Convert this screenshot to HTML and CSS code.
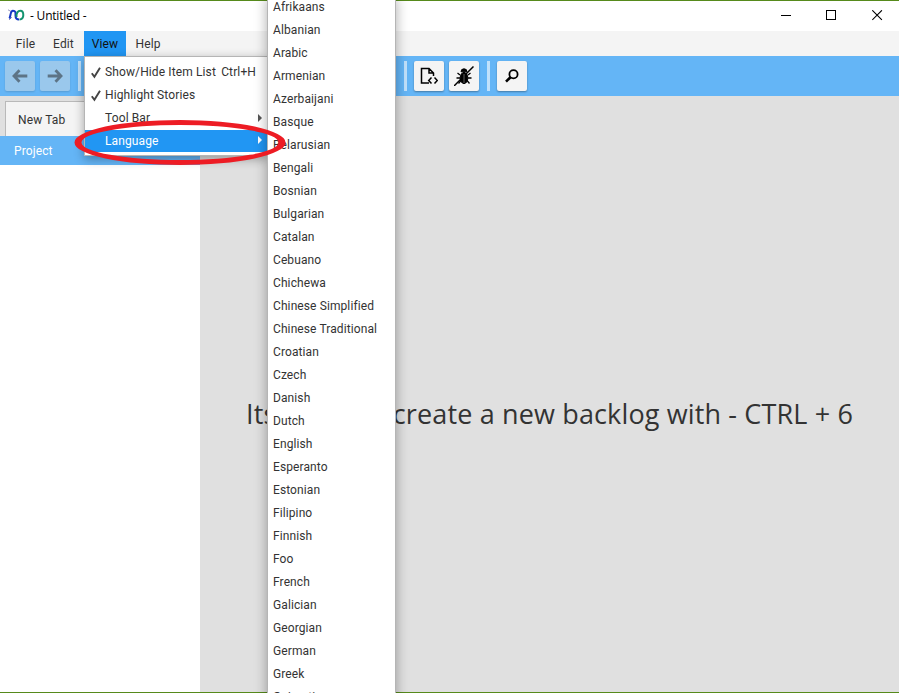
FILE: index.html
```html
<!DOCTYPE html>
<html lang="en">
<head>
<meta charset="utf-8">
<title>Untitled</title>
<link rel="stylesheet" href="styles.css">
</head>
<body>
<div class="window">
  <header class="titlebar">
    <svg class="logo" width="17" height="12" viewBox="0 0 17 12" fill="none" stroke-width="2"><path d="M0 .8L4 3M1 11l3-3" stroke="#9999c0" stroke-width="1"/><path d="M1.3 9.5C2.8 8 2 1.8 5 1.8S7.5 4 7.5 6.5s1 4 3.5 4" stroke="#1536c5"/><path d="M8.5 8C8 4 10 1.8 12.3 1.8S15.3 3.5 15.3 6S14 10.4 11.5 10.4" stroke="#13936f"/></svg>
    <span class="title">- Untitled -</span>
    <div class="controls">
      <svg width="11" height="11" viewBox="0 0 11 11" shape-rendering="crispEdges"><path d="M1 5.5h10" stroke="#000"/></svg>
      <svg width="11" height="11" viewBox="0 0 11 11" shape-rendering="crispEdges"><path d="M.5.5h9v9h-9z" fill="none" stroke="#000"/></svg>
      <svg width="11" height="11" viewBox="0 0 11 11"><path d="M.3.3l9.6 9.6M9.9.3L.3 9.9" stroke="#000" stroke-width="1.1"/></svg>
    </div>
  </header>
  <nav class="menubar"><span class="m-file">File</span><span class="m-edit">Edit</span><span class="m-view">View</span><span class="m-help">Help</span></nav>
  <div class="toolbar">
    <button class="tool off"><svg width="16" height="14" viewBox="0 0 16 14" fill="none" stroke="#222" stroke-width="2.8"><path d="M15.3 7H2M7.5 1.3L2 7l5.5 5.7"/></svg></button>
    <button class="tool off"><svg width="16" height="14" viewBox="0 0 16 14" fill="none" stroke="#222" stroke-width="2.8"><path d="M.7 7H14M8.5 1.3L14 7l-5.5 5.7"/></svg></button>
    <i class="sep"></i>
    <i class="sep sep-mid"></i>
    <button class="tool"><svg width="18" height="18" viewBox="0 0 18 18" fill="none" stroke="#000" stroke-width="1.5"><path d="M9 16H1.5V1.5H9L13.5 6v3M9 1.5V6h4.5M11.5 10.5l-2.8 3l2.8 3M14.5 10.5l2.8 3l-2.8 3"/></svg></button>
    <button class="tool"><svg width="20" height="20" viewBox="0 0 20 20" fill="none" stroke="#000"><path d="M0 20L19.5.5" stroke-width="1.5"/><ellipse cx="10" cy="12" rx="3.8" ry="5.6" fill="#000"/><path d="M7 5.8a3 3 0 016 0z" fill="#000"/><path d="M6 9L3.5 7M6 12H2.5M7 14.5L4.5 17.5M14 9l2.5-2M14 12h3.5M13 14.5l2.5 3" stroke-width="1.3"/><path d="M10 8v9" stroke="#777" stroke-width=".8"/></svg></button>
    <i class="sep sep-end"></i>
    <button class="tool"><svg width="14" height="14" viewBox="0 0 14 14" fill="none" stroke="#000"><circle cx="8.5" cy="5.2" r="4.1" stroke-width="1.8"/><path d="M5.5 8.2L1 12.6" stroke-width="2.6"/></svg></button>
  </div>
  <main class="content">
    <aside class="side">
      <div class="tabs"><div class="tab">New Tab</div></div>
      <div class="project">Project</div>
      <div class="list"></div>
    </aside>
    <section class="stage"><p class="hint"><span>Its easy to</span><span>create a new backlog with - CTRL + 6</span></p></section>
  </main>
  <div class="dropdown">
    <div class="item"><svg class="check" width="10" height="12" viewBox="0 0 10 12"><path d="M.8 6.3L3.4 9.8L9 .8" fill="none" stroke="#444" stroke-width="1.9"/></svg><span>Show/Hide Item List</span><span class="key">Ctrl+H</span></div>
    <div class="item"><svg class="check" width="10" height="12" viewBox="0 0 10 12"><path d="M.8 6.3L3.4 9.8L9 .8" fill="none" stroke="#444" stroke-width="1.9"/></svg><span>Highlight Stories</span></div>
    <div class="item"><i class="check"></i><span>Tool Bar</span><i class="arrow"></i></div>
    <div class="item active"><i class="check"></i><span>Language</span><i class="arrow"></i></div>
  </div>
  <div class="languages">
    <div>Afrikaans</div><div>Albanian</div><div>Arabic</div><div>Armenian</div><div>Azerbaijani</div><div>Basque</div><div>Belarusian</div><div>Bengali</div><div>Bosnian</div><div>Bulgarian</div><div>Catalan</div><div>Cebuano</div><div>Chichewa</div><div>Chinese Simplified</div><div>Chinese Traditional</div><div>Croatian</div><div>Czech</div><div>Danish</div><div>Dutch</div><div>English</div><div>Esperanto</div><div>Estonian</div><div>Filipino</div><div>Finnish</div><div>Foo</div><div>French</div><div>Galician</div><div>Georgian</div><div>German</div><div>Greek</div><div>Gujarati</div>
  </div>
  <svg class="ring" width="214" height="48" viewBox="0 0 214 48"><path fill="#ed1c24" fill-rule="evenodd" d="M.5 23.5a105.5 22.5 0 01211 0a105.5 22.5 0 01-211 0zM7.5 23.5a98.5 17.5 0 00197 0a98.5 17.5 0 00-197 0z"/></svg>
</div>
</body>
</html>
```
FILE: styles.css
```css
* { box-sizing: border-box; }
body { margin: 0; overflow: hidden; font: 12px/23px Roboto, sans-serif; color: #333; letter-spacing: .12px; }
.window { position: relative; width: 899px; height: 693px; overflow: hidden; display: flex; flex-direction: column; background: #fff; }
.titlebar { height: 31px; flex: none; display: flex; align-items: center; padding: 0 17px 0 8px; border-top: 1px solid #568a1b; }
.logo { margin-top: -2px; }
.title { margin-left: 5px; font: 12px/28px "Open Sans", sans-serif; letter-spacing: -.2px; color: #000; }
.controls { margin-left: auto; display: flex; gap: 35px; margin-top: -2px; margin-right: -1px; }
.menubar { height: 25px; flex: none; display: flex; background: #f4f4f4; line-height: 26px; }
.menubar span { text-align: center; }
.m-file { width: 35px; margin-left: 8px; }
.m-edit { width: 41px; }
.m-view { width: 42px; background: #2196f3; color: #111; }
.m-help { width: 44px; }
.toolbar { height: 40px; flex: none; display: flex; align-items: center; background: #64b5f6; padding-left: 5px; }
.tool { width: 30px; height: 30px; flex: none; margin: 0 5px 0 0; padding: 0; border: 0; border-radius: 2px; background: #f4f4f4; display: grid; place-items: center; box-shadow: 0 1px 2px #0005; }
.tool.off { background: #9ac8ec; box-shadow: 0 1px 2px #0002; }
.tool.off svg { opacity: .5; }
.sep { width: 3px; height: 30px; flex: none; background: #c1e1fb; margin-left: 3px; }
.sep-mid { margin: 0 7px 0 323px; }
.sep-end { margin-right: 7px; }
.content { flex: 1; display: flex; min-height: 0; background: #e0e0e0; border-bottom: 1px solid #568a1b; }
.side { width: 200px; display: flex; flex-direction: column; }
.tabs { height: 40px; padding: 5px 0 0 5px; }
.tab { height: 35px; width: 90px; border: 1px solid #b9b9b9; border-bottom: 0; background: #f4f4f4; padding-left: 12px; line-height: 36px; }
.project { height: 29px; background: #64b5f6; color: #fff; padding-left: 14px; line-height: 30px; }
.list { flex: 1; background: #fff; }
.stage { flex: 1; }
.hint { margin: 299px 0 0 46px; width: 607px; display: flex; justify-content: space-between; white-space: nowrap; font: 27px/38px "Open Sans", sans-serif; letter-spacing: .14px; }
.dropdown { position: absolute; left: 84px; top: 56px; width: 184px; height: 100px; padding-top: 4px; background: #fff; border: 1px solid #b5b5b5; box-shadow: 0 3px 10px #0005; }
.item { height: 23px; display: flex; align-items: center; padding-left: 6px; white-space: nowrap; }
.item > span { position: relative; top: 0; }
.check { width: 10px; margin-right: 4px; flex: none; }
.key { margin-left: auto; margin-right: 11px; }
.arrow { margin: -2px 5px 0 auto; border: 4px solid transparent; border-left: 4px solid #555; border-right: 0; }
.active { background: #2196f3; color: #fff; height: 22px; line-height: 22px; }
.active .arrow { border-left-color: #fff; }
.languages { position: absolute; left: 267px; top: -5px; width: 129px; height: 720px; padding-left: 5px; background: #fff; border: 1px solid #b5b5b5; box-shadow: 0 3px 12px #0005; white-space: nowrap; letter-spacing: .1px; }
.ring { position: absolute; left: 74px; top: 119px; }
```
